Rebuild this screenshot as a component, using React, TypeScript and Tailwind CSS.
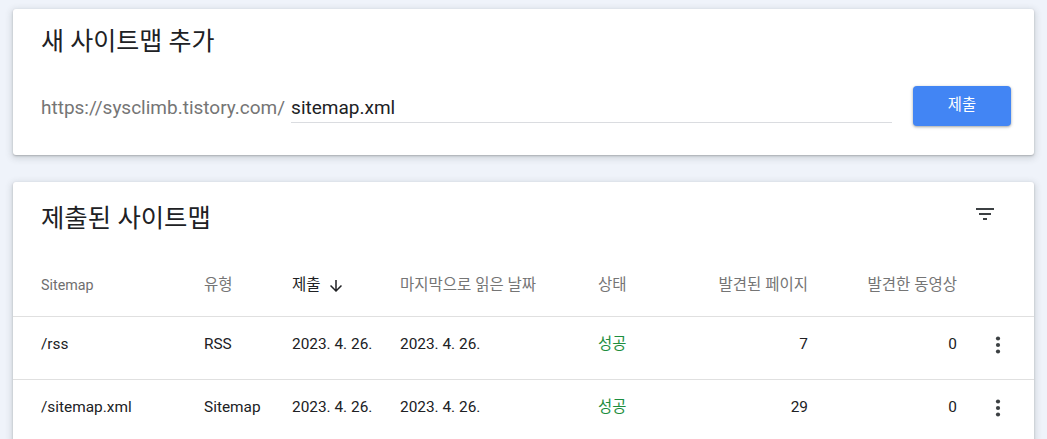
import React from "react";

const font = { fontFamily: 'Roboto, "Noto Sans CJK KR", sans-serif' };

function FilterIcon() {
  return (
    <svg width="24" height="24" viewBox="0 0 24 24" fill="#3c4043">
      <path d="M10 18h4v-2h-4v2zM3 6v2h18V6H3zm3 7h12v-2H6v2z" />
    </svg>
  );
}

function MoreIcon() {
  return (
    <svg width="24" height="24" viewBox="0 0 24 24" fill="#3c4043">
      <circle cx="12" cy="5.5" r="2.1" />
      <circle cx="12" cy="12" r="2.1" />
      <circle cx="12" cy="18.5" r="2.1" />
    </svg>
  );
}

function ArrowDown() {
  return (
    <svg width="18" height="18" viewBox="0 0 24 24" fill="#202124">
      <path d="M20 12l-1.41-1.41L13 16.17V4h-2v12.17l-5.58-5.59L4 12l8 8 8-8z" />
    </svg>
  );
}

const rows = [
  { path: "/rss", type: "RSS", sub: "2023. 4. 26.", read: "2023. 4. 26.", status: "성공", pages: "7", videos: "0" },
  { path: "/sitemap.xml", type: "Sitemap", sub: "2023. 4. 26.", read: "2023. 4. 26.", status: "성공", pages: "29", videos: "0" },
];

const grid = "grid grid-cols-[163px_88px_108px_198px_110px_100px_149px_1fr] items-center pl-[28px]";

export default function App() {
  return (
    <div className="min-h-screen bg-[#eff3fa] px-[13px] pt-[9px]" style={font}>
      <div className="rounded-[3px] bg-white pl-[28px] pr-[23px] pt-[19px] pb-[29px] shadow-[0_1px_2px_0_rgba(60,64,67,0.3),0_2px_6px_2px_rgba(60,64,67,0.15)]">
        <div className="h-[28px] text-[25px] leading-[28px] text-[#202124]">새 사이트맵 추가</div>
        <div className="mt-[30px] flex h-[40px] items-start">
          <span className="mt-[9px] text-[19px] leading-[26px] text-[#757575]">https://sysclimb.tistory.com/</span>
          <div className="ml-[6px] mt-[9px] h-[28px] flex-1 border-b border-[#dadce0] text-[19px] leading-[26px] text-[#202124]">
            sitemap.xml
          </div>
          <button className="ml-[21px] h-[40px] w-[98px] rounded-[4px] bg-[#4285f4] text-[15.4px] text-white shadow-[0_1px_2px_0_rgba(60,64,67,0.3),0_1px_3px_1px_rgba(60,64,67,0.15)]">
            제출
          </button>
        </div>
      </div>

      <div className="mt-[27px] rounded-[3px] bg-white shadow-[0_1px_2px_0_rgba(60,64,67,0.3),0_2px_6px_2px_rgba(60,64,67,0.15)]">
        <div className="flex h-[72px] items-center justify-between pl-[28px] pr-[37px]">
          <div className="text-[25.4px] leading-[28px] text-[#202124]">제출된 사이트맵</div>
          <div className="-mt-[8px]">
            <FilterIcon />
          </div>
        </div>
        <div className={`${grid} h-[63px] border-b border-[#e0e0e0] pt-[2px] text-[15.5px] text-[#757575]`}>
          <div className="text-[14.3px] text-[#6f6f6f]">Sitemap</div>
          <div>유형</div>
          <div className="flex items-center gap-[6px] text-[#202124]">
            <span>제출</span>
            <ArrowDown />
          </div>
          <div>마지막으로 읽은 날짜</div>
          <div>상태</div>
          <div className="text-right">발견된 페이지</div>
          <div className="text-right">발견한 동영상</div>
          <div />
        </div>
        {rows.map((r) => (
          <div key={r.path} className={`${grid} h-[63px] border-b border-[#e0e0e0] pb-[7px] text-[15.4px] text-[#202124]`}>
            <div>{r.path}</div>
            <div>{r.type}</div>
            <div>{r.sub}</div>
            <div>{r.read}</div>
            <div className="text-[#1e8e3e]">{r.status}</div>
            <div className="text-right">{r.pages}</div>
            <div className="text-right">{r.videos}</div>
            <div className="pl-[29px]">
              <MoreIcon />
            </div>
          </div>
        ))}
      </div>
    </div>
  );
}
